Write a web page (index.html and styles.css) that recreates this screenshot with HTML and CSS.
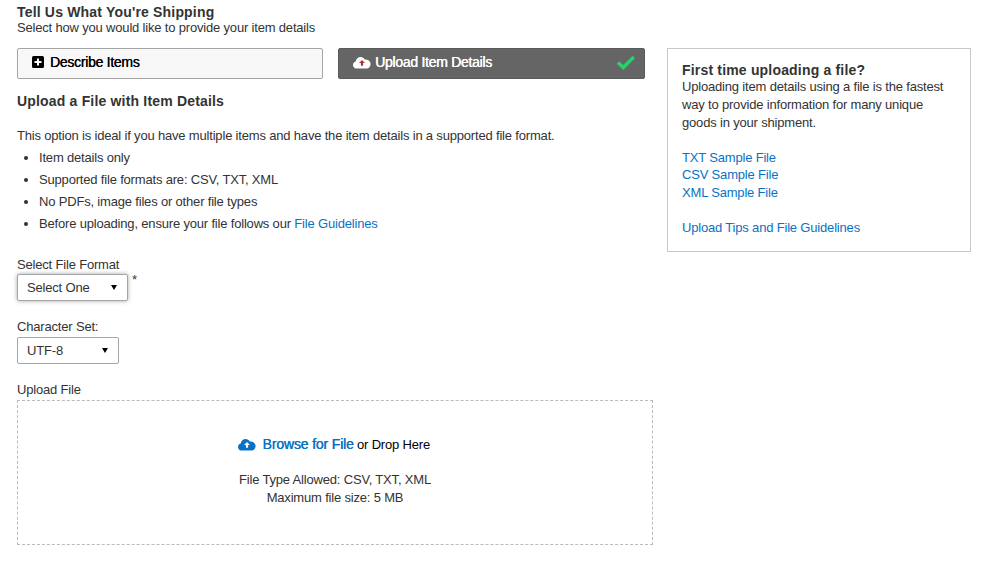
FILE: index.html
```html
<!DOCTYPE html>
<html lang="en">
<head>
<meta charset="utf-8">
<title>Tell Us What You're Shipping</title>
<link rel="stylesheet" href="styles.css">
</head>
<body>
<div class="page">
  <main class="main">
    <h1 class="title">Tell Us What You're Shipping</h1>
    <p class="subtitle">Select how you would like to provide your item details</p>
    <div class="tabs">
      <button class="tab tab-light" type="button">
        <svg class="icon-plus" viewBox="0 0 12 12" width="12" height="12"><rect width="12" height="12" rx="1.5" fill="#000"/><path d="M6 2.5v7M2.5 6h7" stroke="#fff" stroke-width="2"/></svg>
        <span>Describe Items</span>
      </button>
      <button class="tab tab-dark" type="button">
        <svg class="icon-cloud" viewBox="0 0 18 13" width="18" height="13"><path fill="#fff" d="M4.200 12.600C1.900 12.600 0 11 0 8.900c0-1.700 1.100-3 2.700-3.500C3.100 2.900 5.100 1 7.600 1c1.800 0 3.400 1 4.200 2.500 2.700-.4 5.200 1.300 5.700 3.700.5 2.900-1.500 5.400-4.500 5.400z"/><path fill="#a33" d="M9 3.900l3 3.100h-1.900v2.700H7.900V7H6z"/></svg>
        <span>Upload Item Details</span>
        <svg class="icon-check" viewBox="0 0 20 15" width="20" height="15"><path d="M2 7.500l5.200 5L17.800 2" fill="none" stroke="#2ecc71" stroke-width="3.600"/></svg>
      </button>
    </div>
    <h2 class="section">Upload a File with Item Details</h2>
    <p class="intro">This option is ideal if you have multiple items and have the item details in a supported file format.</p>
    <ul class="points">
      <li>Item details only</li>
      <li>Supported file formats are: CSV, TXT, XML</li>
      <li>No PDFs, image files or other file types</li>
      <li>Before uploading, ensure your file follows our <a href="#">File Guidelines</a></li>
    </ul>
    <div class="field field-format">
      <div class="label label-format">Select File Format</div>
      <div class="control-row">
        <div class="select select-format"><span>Select One</span><span class="caret"></span></div>
        <span class="required">*</span>
      </div>
    </div>
    <div class="field field-charset">
      <div class="label">Character Set:</div>
      <div class="select select-charset"><span>UTF-8</span><span class="caret"></span></div>
    </div>
    <div class="field field-upload">
      <div class="label">Upload File</div>
      <div class="dropzone">
        <div class="browse">
          <svg class="icon-cloud-blue" viewBox="0 0 18 13" width="18" height="13"><path fill="#0a72c4" d="M4.200 12.600C1.900 12.600 0 11 0 8.900c0-1.700 1.100-3 2.700-3.500C3.100 2.900 5.100 1 7.600 1c1.800 0 3.400 1 4.200 2.500 2.700-.4 5.200 1.300 5.700 3.700.5 2.900-1.500 5.400-4.500 5.400z"/><path fill="#fff" d="M9 3.900l3 3.100h-1.900v2.700H7.900V7H6z"/></svg>
          <a class="browse-link" href="#">Browse for File</a> <span class="drop">or Drop Here</span>
        </div>
        <div class="limits">File Type Allowed: CSV, TXT, XML<br>Maximum file size: 5 MB</div>
      </div>
    </div>
  </main>
  <aside class="help">
    <h3 class="help-title">First time uploading a file?</h3>
    <p class="help-text">Uploading item details using a file is the fastest way to provide information for many unique goods in your shipment.</p>
    <div class="help-links">
      <a href="#">TXT Sample File</a>
      <a href="#">CSV Sample File</a>
      <a href="#">XML Sample File</a>
    </div>
    <div class="help-tips"><a href="#">Upload Tips and File Guidelines</a></div>
  </aside>
</div>
</body>
</html>
```
FILE: styles.css
```css
* { box-sizing: border-box; }
html, body { margin: 0; padding: 0; background: #fff; }
body {
  font-family: "Liberation Sans", Arial, sans-serif;
  font-size: 13px;
  letter-spacing: -0.18px;
  line-height: 18px;
  color: #333;
}
a { color: #0a72c4; text-decoration: none; }
.page {
  display: flex;
  align-items: flex-start;
  padding: 4px 13px 0 17px;
  height: 572px;
  overflow: hidden;
}
.main { width: 636px; flex: none; }
.title {
  margin: 0;
  font-size: 14px;
  line-height: 16px;
  font-weight: 700;
  letter-spacing: 0.18px;
}
.subtitle { margin: 0; line-height: 16px; }
.tabs { display: flex; gap: 15px; margin-top: 12px; width: 628px; }
.tab {
  height: 31px;
  display: flex;
  align-items: center;
  padding: 0 14px 3px;
  border-radius: 2px;
  font: inherit;
  font-size: 14px;
  letter-spacing: -0.28px;
  text-align: left;
}
.tab-light { flex: 0 0 306px; background: #f8f8f8; border: 1px solid #a5a5a5; color: #000; text-shadow: 0.2px 0 0 #000; }
.tab-dark { flex: 1; background: #656565; border: 1px solid #5a5a5a; color: #fff; text-shadow: 0.4px 0 0 #fff; }
.icon-plus { margin-right: 6px; flex: none; }
.icon-cloud { margin-right: 4px; flex: none; }
.icon-check { margin-left: auto; margin-right: -6px; flex: none; }
.section {
  margin: 13px 0 0;
  font-size: 14px;
  line-height: 18px;
  font-weight: 700;
  letter-spacing: 0.18px;
}
.intro { margin: 17px 0 0; }
.points { margin: 2px 0 0; padding: 0 0 0 22px; }
.points li { line-height: 22px; }
.field-format { margin-top: 20px; }
.label { line-height: 18px; }
.label-format { line-height: 19px; }
.control-row { display: flex; align-items: flex-start; }
.select {
  height: 27px;
  display: flex;
  align-items: center;
  justify-content: space-between;
  background: #fff;
  border: 1px solid #a5a5a5;
  border-radius: 2px;
  padding: 0 9px;
  color: #333;
}
.select-format { width: 111px; box-shadow: 0 0 4px rgba(0,0,0,.35); }
.select-charset { width: 102px; }
.caret {
  width: 0;
  height: 0;
  border-left: 3.500px solid transparent;
  border-right: 3.500px solid transparent;
  border-top: 5px solid #000;
  margin-right: 1px;
}
.required { margin: -3px 0 0 4px; }
.field-charset { margin-top: 17px; }
.field-charset .label { margin-bottom: 1px; }
.field-upload { margin-top: 17px; }
.dropzone {
  width: 636px;
  height: 145px;
  margin-top: 1px;
  border: 1px dashed #bbb;
  text-align: center;
  padding-top: 34px;
}
.browse { line-height: 18px; padding-right: 2px; }
.icon-cloud-blue { vertical-align: -2px; margin-right: 3px; }
.browse-link { font-size: 14px; letter-spacing: -0.15px; text-shadow: 0.4px 0 0 #0a72c4; }
.drop { color: #000; }
.limits { margin-top: 17px; }
.help {
  width: 304px;
  height: 204px;
  flex: none;
  margin: 44px 0 0 14px;
  border: 1px solid #c8c8c8;
  padding: 13px 14px 0;
}
.help-title {
  margin: 0;
  font-size: 14px;
  line-height: 16px;
  font-weight: 700;
  letter-spacing: 0.18px;
}
.help-text { margin: 0; }
.help-links { margin-top: 16.6px; }
.help-links a { display: block; line-height: 17.500px; }
.help-tips { margin-top: 18px; }
```
